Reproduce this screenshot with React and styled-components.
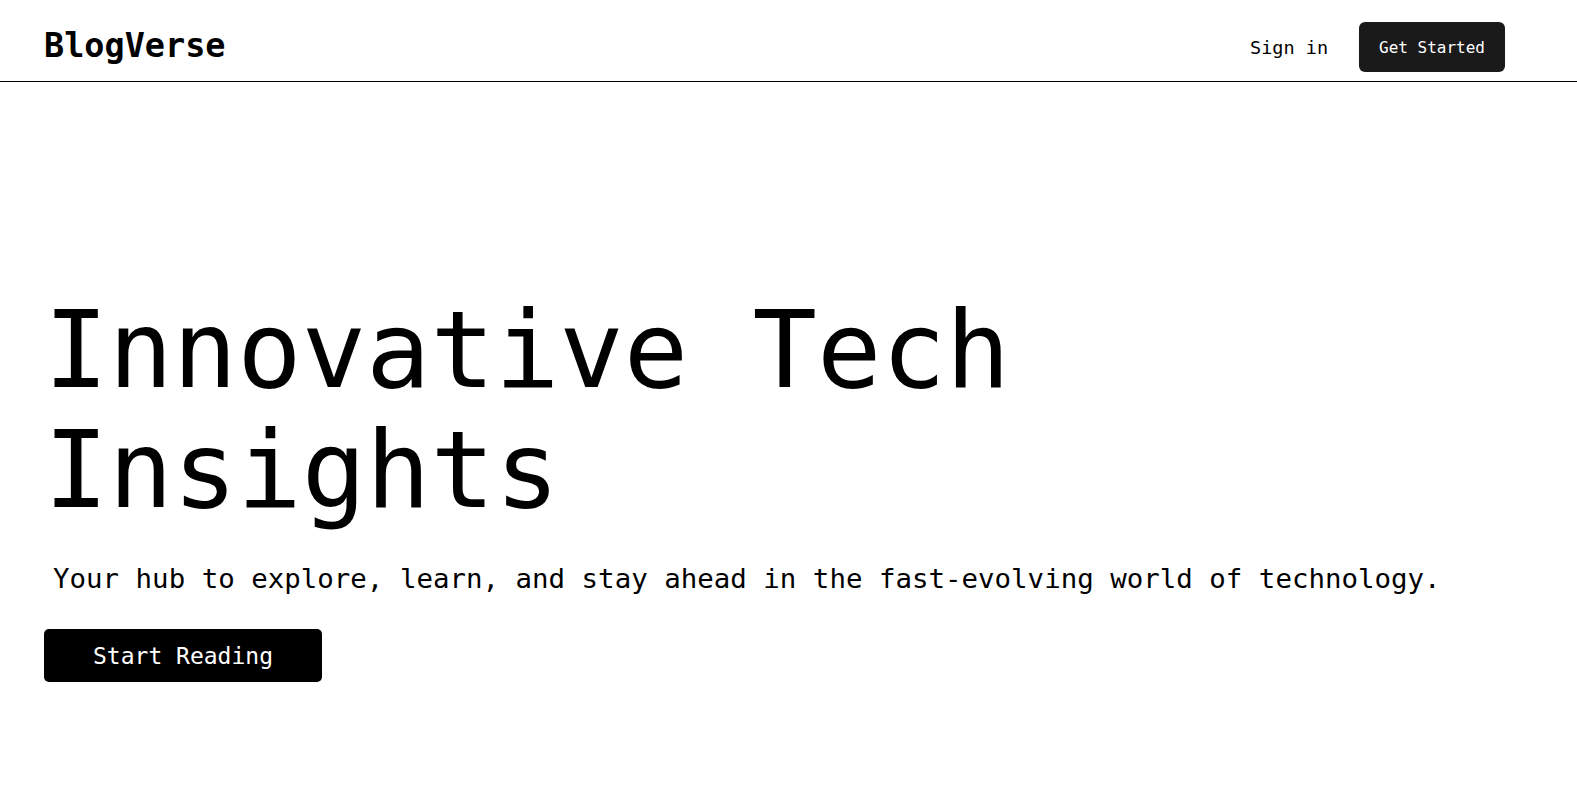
import React from "react";
import styled, { createGlobalStyle } from "styled-components";

const GlobalStyle = createGlobalStyle`
  html, body {
    margin: 0;
    padding: 0;
    background: #ffffff;
    color: #000000;
    font-family: "DejaVu Sans Mono", "Liberation Mono", monospace;
  }
`;

// top bar with logo and auth links
const Navbar = styled.nav`
  display: flex;
  align-items: center;
  justify-content: space-between;
  height: 82px;
  padding: 13px 72px 0 44px;
  box-sizing: border-box;
  border-bottom: 1px solid #000;
`;

const Logo = styled.div`
  font-size: 33.5px;
  font-weight: 700;
  margin-bottom: 4px;
`;

const NavActions = styled.div`
  display: flex;
  align-items: center;
  gap: 31px;
`;

const SignIn = styled.a`
  font-size: 18.5px;
  color: #000;
  text-decoration: none;
  cursor: pointer;
`;

const Button = styled.button`
  font-family: inherit;
  color: #fff;
  border: none;
  cursor: pointer;
  background: ${(p) => (p.$dark ? "#000" : "#1a1a1a")};
  font-size: ${(p) => (p.$big ? "23px" : "16px")};
  padding: ${(p) => (p.$big ? "13.5px 49px" : "15.5px 20px")};
  border-radius: ${(p) => (p.$big ? "5px" : "6px")};
`;

const Hero = styled.section`
  display: flex;
  flex-direction: column;
  align-items: flex-start;
  padding: 208px 72px 0 44px;
`;

const Title = styled.h1`
  margin: 0;
  font-size: 107px;
  font-weight: 400;
  line-height: 120px;
  max-width: 1100px;
`;

const Subtitle = styled.p`
  margin: 33px 0 0 9px;
  font-size: 27.45px;
`;

const Actions = styled.div`
  margin-top: 35px;
`;

export default function App() {
  return (
    <>
      <GlobalStyle />
      <Navbar>
        <Logo>BlogVerse</Logo>
        <NavActions>
          <SignIn>Sign in</SignIn>
          <Button>Get Started</Button>
        </NavActions>
      </Navbar>
      <Hero>
        <Title>Innovative Tech Insights</Title>
        <Subtitle>
          Your hub to explore, learn, and stay ahead in the fast-evolving world of technology.
        </Subtitle>
        <Actions>
          <Button $big $dark>Start Reading</Button>
        </Actions>
      </Hero>
    </>
  );
}
